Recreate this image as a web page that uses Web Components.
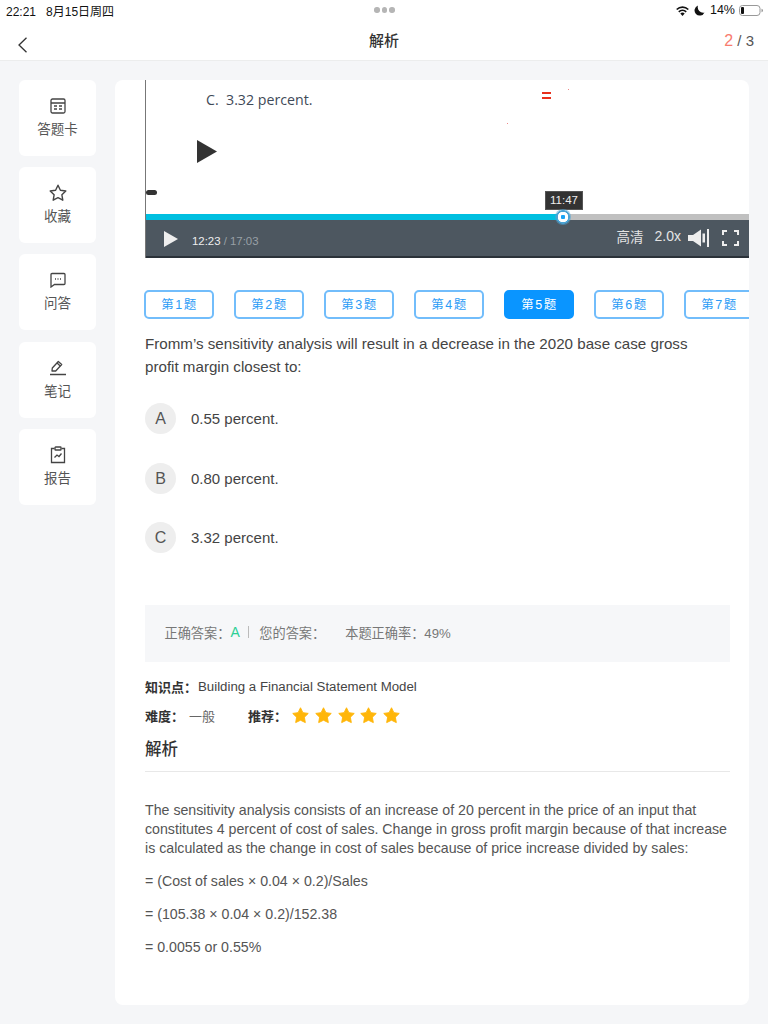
<!DOCTYPE html>
<html lang="zh">
<head>
<meta charset="utf-8">
<title>解析</title>
<style>
  html, body { margin: 0; height: 1024px; overflow: hidden; }
  body {
    background: #f5f6f8;
    color: #444;
    font-family: "Liberation Sans", "Noto Sans CJK SC", sans-serif;
  }
</style>
</head>
<body>
<top-bar></top-bar>
<page-layout>
  <side-rail slot="rail">
    <side-item label="答题卡"><svg viewBox="0 0 16 16" width="16" height="16" fill="none" stroke="#444" stroke-width="1.3"><rect x="1" y="1" width="14" height="14" rx="1.5"/><path d="M1 5h14M4 8h3M9 8h3M4 11h3M9 11h3"/></svg></side-item>
    <side-item label="收藏"><svg viewBox="0 0 18 18" width="18" height="18" fill="none" stroke="#444" stroke-width="1.4" stroke-linejoin="round"><path d="M9 1.2l2.4 5 5.4.8-3.9 3.8.9 5.4L9 13.700l-4.800 2.500.9-5.400L1.200 7l5.400-.8z"/></svg></side-item>
    <side-item label="问答"><svg viewBox="0 0 16 16" width="16" height="16" fill="none" stroke="#444" stroke-width="1.3"><path d="M2 1.500h12a1 1 0 0 1 1 1v9a1 1 0 0 1-1 1H4.500L1 15V2.500a1 1 0 0 1 1-1z"/><path d="M5 7h1M7.500 7h1M10 7h1" stroke-width="1.500"/></svg></side-item>
    <side-item label="笔记"><svg viewBox="0 0 18 16" width="18" height="16" fill="none" stroke="#444" stroke-width="1.3" stroke-linejoin="round"><path d="M3 11l.3-3 6-6.500 3.400 3-6 6.500z"/><path d="M8 3l3.300 3"/><path d="M1 14.500h16" stroke-width="1.500"/></svg></side-item>
    <side-item label="报告"><svg viewBox="0 0 16 18" width="16" height="18" fill="none" stroke="#444" stroke-width="1.300"><path d="M4.500 2.500H1.500v14h13v-14h-3"/><rect x="5" y="1" width="6" height="3" rx=".6"/><path d="M4.500 11.500l2.500-2.500 2 1.500 2.500-3"/></svg></side-item>
  </side-rail>
  <main-card slot="main">
    <video-player></video-player>
    <question-tabs></question-tabs>
    <question-text>Fromm’s sensitivity analysis will result in a decrease in the 2020 base case gross profit margin closest to:</question-text>
    <option-list>
      <option-row letter="A">0.55 percent.</option-row>
      <option-row letter="B">0.80 percent.</option-row>
      <option-row letter="C">3.32 percent.</option-row>
    </option-list>
    <answer-box></answer-box>
    <meta-info></meta-info>
    <analysis-block>
      <p>The sensitivity analysis consists of an increase of 20 percent in the price of an input that constitutes 4 percent of cost of sales. Change in gross profit margin because of that increase is calculated as the change in cost of sales because of price increase divided by sales:</p>
      <p>= (Cost of sales × 0.04 × 0.2)/Sales</p>
      <p>= (105.38 × 0.04 × 0.2)/152.38</p>
      <p>= 0.0055 or 0.55%</p>
    </analysis-block>
  </main-card>
</page-layout>

<script>
class TopBar extends HTMLElement {
  constructor() {
    super();
    this.shadowDOM = this.attachShadow({ mode: "open" });
  }
  connectedCallback() {
    this.shadowDOM.innerHTML = `
      <style>
        :host { display: block; background: #fff; height: 60px; border-bottom: 1px solid #eceded; }
        .status { display: grid; grid-template-columns: 1fr auto 1fr; align-items: center; height: 20px; padding: 0 5px 0 6px; font-size: 12px; color: #111; }
        .dots { display: flex; gap: 2px; }
        .dots i { width: 5.5px; height: 5.5px; border-radius: 50%; background: #b5b5b5; }
        .right { display: flex; justify-content: flex-end; align-items: center; gap: 4px; font-size: 12.5px; }
        .date { margin-left: 10px; }
        .nav { display: grid; grid-template-columns: 1fr auto 1fr; align-items: center; height: 40px; padding: 0 14px 0 18px; }
        .nav svg { display: block; margin-top: 9px; }
        .title { font-size: 15px; font-weight: 500; color: #333; margin: -2px 0 0 -4px; }
        .count { justify-self: end; font-size: 15px; color: #555; padding-top: 2px; }
        .count b { font-weight: 400; color: #f87c6f; font-size: 16px; }
      </style>
      <div class="status">
        <div>22:21<span class="date">8月15日周四</span></div>
        <div class="dots"><i></i><i></i><i></i></div>
        <div class="right">
          <svg width="15" height="11" viewBox="0 0 15 11"><path d="M7.500 11L5.300 8.500a3.200 3.200 0 0 1 4.400 0z" fill="#111"/><path d="M3.800 6.800a5.400 5.400 0 0 1 7.400 0M1.700 4.500a8.400 8.400 0 0 1 11.600 0" fill="none" stroke="#111" stroke-width="1.700"/></svg>
          <svg width="11" height="11" viewBox="0 0 11 11"><path d="M4 .5a5.200 5.200 0 1 0 6.500 7A5.500 5.500 0 0 1 4 .5z" fill="#111"/></svg>
          <span style="margin-left:1px">14%</span>
          <svg width="24" height="11" viewBox="0 0 24 11"><rect x=".5" y=".5" width="20.500" height="10" rx="3" fill="none" stroke="#999"/><rect x="2" y="2" width="3" height="7" rx="1" fill="#111"/><path d="M22.500 3.800c1 .3 1.500 1 1.500 1.700s-.5 1.400-1.500 1.700z" fill="#999"/></svg>
        </div>
      </div>
      <div class="nav">
        <svg width="9" height="16" viewBox="0 0 9 16" fill="none" stroke="#333" stroke-width="1.300"><path d="M8.500 .7L1 8l7.500 7.300"/></svg>
        <div class="title">解析</div>
        <div class="count"><b>2</b> / 3</div>
      </div>`;
  }
}
customElements.define("top-bar", TopBar);

class PageLayout extends HTMLElement {
  constructor() {
    super();
    this.attachShadow({ mode: "open" }).innerHTML = `
      <style>
        :host { display: flex; align-items: flex-start; gap: 19px; padding: 19px 19px 0 19px; }
      </style>
      <slot name="rail"></slot><slot name="main"></slot>`;
  }
}
customElements.define("page-layout", PageLayout);

class SideRail extends HTMLElement {
  constructor() {
    super();
    this.attachShadow({ mode: "open" }).innerHTML = `
      <style>
        :host { display: flex; flex-direction: column; gap: 11.2px; width: 77px; flex: none; }
      </style>
      <slot></slot>`;
  }
}
customElements.define("side-rail", SideRail);

class SideItem extends HTMLElement {
  constructor() {
    super();
    this.attachShadow({ mode: "open" }).innerHTML = `
      <style>
        :host { display: flex; flex-direction: column; align-items: center; height: 76px; padding-top: 17px; box-sizing: border-box; background: #fff; border-radius: 6px; }
        .icon { height: 18px; display: flex; align-items: center; justify-content: center; }
        .label { margin-top: 6px; font-size: 13.5px; line-height: 18px; color: #555; }
      </style>
      <div class="icon"><slot></slot></div>
      <div class="label">${this.getAttribute("label")}</div>`;
  }
}
customElements.define("side-item", SideItem);

class MainCard extends HTMLElement {
  constructor() {
    super();
    this.attachShadow({ mode: "open" }).innerHTML = `
      <style>
        :host { display: block; width: 634px; height: 925px; box-sizing: border-box; padding: 0 0 0 30px; background: #fff; border-radius: 8px; overflow: hidden; }
      </style>
      <slot></slot>`;
  }
}
customElements.define("main-card", MainCard);

class VideoPlayer extends HTMLElement {
  constructor() {
    super();
    this.attachShadow({ mode: "open" }).innerHTML = `
      <style>
        :host { display: block; position: relative; height: 178px; border-left: 1px solid #777; box-sizing: border-box; font-family: "Open Sans", "Noto Sans CJK SC", sans-serif; }
        .frame { height: 134px; position: relative; }
        .line { position: absolute; left: 60px; top: 9.5px; font-size: 14.2px; line-height: 20px; color: #3f4a58; }
        .big { position: absolute; left: 51px; top: 60px; }
        .mark { position: absolute; left: 0; top: 110px; width: 11px; height: 5px; border-radius: 2.5px; background: #333; }
        .red { position: absolute; left: 396px; top: 12px; width: 9px; height: 7px; border-top: 2px solid #e8301c; border-bottom: 2px solid #e8301c; box-sizing: border-box; }
        .speck { position: absolute; width: 1px; height: 1px; background: #e88; }
        .track { height: 5.5px; background: #c0c0c0; }
        .track div { width: 417px; height: 100%; background: #00bfe0; }
        .bar { display: flex; align-items: center; height: 38.5px; background: #4d5760; border-bottom: 2px solid #2b3239; box-sizing: border-box; padding: 0 10px 0 18px; color: #e4e4e4; font-family: "Liberation Sans", "Noto Sans CJK SC", sans-serif; }
        .play { margin-top: 2px; }
        .time { margin-left: 14px; margin-top: 7px; font-size: 11.4px; color: #eee; }
        .time span { color: #98a0a6; }
        .spacer { flex: 1; }
        .q { font-size: 13.5px; margin: -4px 0 0 0; }
        .s { font-size: 14px; margin: -3px 0 0 11px; }
        .vol { margin-left: 7px; }
        .full { margin-left: 13px; }
        .tip { position: absolute; left: 399px; top: 111px; width: 38px; height: 19px; background: #333; border: 1px solid #555; box-sizing: border-box; color: #eee; font: 11.5px/17px "Liberation Sans", sans-serif; text-align: center; }
        .knob { position: absolute; left: 409px; top: 129px; width: 16px; height: 16px; border-radius: 50%; background: radial-gradient(circle, #1aa3f5 0 2px, #fff 2.5px 5px, #4aa3d4 5.5px 6.5px, rgba(74,163,212,.55) 7px 8px); }
      </style>
      <div class="frame">
        <div class="line">C.&nbsp; 3.32 percent.</div>
        <svg class="big" width="20" height="23" viewBox="0 0 20 23"><path d="M0 0l20 11.500L0 23z" fill="#333"/></svg>
        <div class="mark"></div>
        <div class="red"></div>
        <div class="speck" style="left:422px;top:9px"></div>
        <div class="speck" style="left:361px;top:43px"></div>
        <div class="speck" style="left:114px;top:-2px;background:#555;height:2px"></div>
      </div>
      <div class="track"><div></div></div>
      <div class="bar">
        <svg class="play" width="14" height="16" viewBox="0 0 14 16"><path d="M0 0l14 8L0 16z" fill="#eee"/></svg>
        <div class="time">12:23 <span>/ 17:03</span></div>
        <div class="spacer"></div>
        <div class="q">高清</div>
        <div class="s">2.0x</div>
        <svg class="vol" width="21" height="18" viewBox="0 0 21 18"><path d="M0 6h5l8-5.500v17L5 12H0z" fill="#eee"/><rect x="14.500" y="4.500" width="2.500" height="9" fill="#eee"/><rect x="19" y="0" width="2" height="18" fill="#eee"/></svg>
        <svg class="full" width="17" height="16" viewBox="0 0 17 16" fill="none" stroke="#eee" stroke-width="2"><path d="M1 5V1h4M12 1h4v4M16 11v4h-4M5 15H1v-4"/></svg>
      </div>
      <div class="tip">11:47</div>
      <div class="knob"></div>`;
  }
}
customElements.define("video-player", VideoPlayer);

class QuestionTabs extends HTMLElement {
  constructor() {
    super();
    const tabs = [1, 2, 3, 4, 5, 6, 7].map(n =>
      `<div class="tab${n === 5 ? " on" : ""}">第 ${n} 题</div>`).join("");
    this.attachShadow({ mode: "open" }).innerHTML = `
      <style>
        :host { display: flex; gap: 19.5px; margin: 32px 0 0 -1.5px; overflow: hidden; }
        .tab { flex: none; width: 70.5px; height: 29px; box-sizing: border-box; border: 2px solid #72bdfb; border-radius: 5px; color: #2c9cf6; font-size: 12.5px; line-height: 26px; text-align: center; word-spacing: -2px; }
        .on { background: #0a95ff; border-color: #0a95ff; color: #fff; }
      </style>
      ${tabs}`;
  }
}
customElements.define("question-tabs", QuestionTabs);

class QuestionText extends HTMLElement {
  constructor() {
    super();
    this.attachShadow({ mode: "open" }).innerHTML = `
      <style>
        :host { display: block; margin-top: 13px; width: 570px; font-size: 15.15px; line-height: 23px; color: #444; }
      </style>
      <slot></slot>`;
  }
}
customElements.define("question-text", QuestionText);

class OptionList extends HTMLElement {
  constructor() {
    super();
    this.attachShadow({ mode: "open" }).innerHTML = `
      <style>
        :host { display: flex; flex-direction: column; gap: 27.5px; margin-top: 24.5px; }
      </style>
      <slot></slot>`;
  }
}
customElements.define("option-list", OptionList);

class OptionRow extends HTMLElement {
  constructor() {
    super();
    this.attachShadow({ mode: "open" }).innerHTML = `
      <style>
        :host { display: flex; align-items: center; gap: 15px; height: 32px; font-size: 15px; color: #444; }
        .dot { width: 31px; height: 31px; border-radius: 50%; background: #eee; text-align: center; line-height: 31px; font-size: 16px; color: #555; }
      </style>
      <div class="dot">${this.getAttribute("letter")}</div><div><slot></slot></div>`;
  }
}
customElements.define("option-row", OptionRow);

class AnswerBox extends HTMLElement {
  constructor() {
    super();
    this.attachShadow({ mode: "open" }).innerHTML = `
      <style>
        :host { display: flex; align-items: center; width: 585px; height: 57px; padding: 0 0 2px 19.5px; box-sizing: border-box; margin-top: 51px; background: #f6f7f9; font-size: 13.2px; color: #777; }
        .a { color: #2ccf96; font-size: 14px; margin-left: 0; }
        .sep { width: 1px; height: 12px; background: #bbb; margin: 0 10px 0 8.5px; }
        .rate { margin-left: 20px; }
      </style>
      <span>正确答案：</span><span class="a">A</span><span class="sep"></span><span>您的答案：</span><span class="rate">本题正确率：49%</span>`;
  }
}
customElements.define("answer-box", AnswerBox);

class MetaInfo extends HTMLElement {
  constructor() {
    super();
    const star = `<svg width="17" height="17" viewBox="0 0 18 18"><path d="M9 .8l2.500 5.200 5.700.8-4.100 4 1 5.700L9 14l-5.100 2.500 1-5.700-4.100-4 5.700-.8z" fill="#ffb60a" stroke="#ffb60a" stroke-linejoin="round"/></svg>`;
    this.attachShadow({ mode: "open" }).innerHTML = `
      <style>
        :host { display: block; margin-top: 15px; font-size: 13.25px; color: #444; }
        .row { display: flex; align-items: center; height: 20px; }
        b { font-weight: 700; color: #333; font-size: 13px; }
        .two { margin-top: 9px; }
        .stars { display: flex; gap: 5.8px; margin-left: 5px; }
        .lvl { margin-left: 5px; color: #666; font-size: 13px; }
        .rec { margin-left: 33px; }
      </style>
      <div class="row"><b>知识点：</b><span style="margin-left:1px">Building a Financial Statement Model</span></div>
      <div class="row two"><b>难度：</b><span class="lvl">一般</span><b class="rec">推荐：</b><span class="stars">${star.repeat(5)}</span></div>`;
  }
}
customElements.define("meta-info", MetaInfo);

class AnalysisBlock extends HTMLElement {
  constructor() {
    super();
    this.attachShadow({ mode: "open" }).innerHTML = `
      <style>
        :host { display: block; width: 585px; margin-top: 10px; }
        h3 { margin: 0; height: 26px; padding-bottom: 9px; border-bottom: 1px solid #e8e8e8; font-size: 16.5px; font-weight: 500; line-height: 26px; color: #333; }
        .body { margin-top: 29px; font-size: 14.2px; line-height: 19px; color: #555; }
        ::slotted(p) { margin: 0 0 14px 0; }
      </style>
      <h3>解析</h3>
      <div class="body"><slot></slot></div>`;
  }
}
customElements.define("analysis-block", AnalysisBlock);
</script>
</body>
</html>
